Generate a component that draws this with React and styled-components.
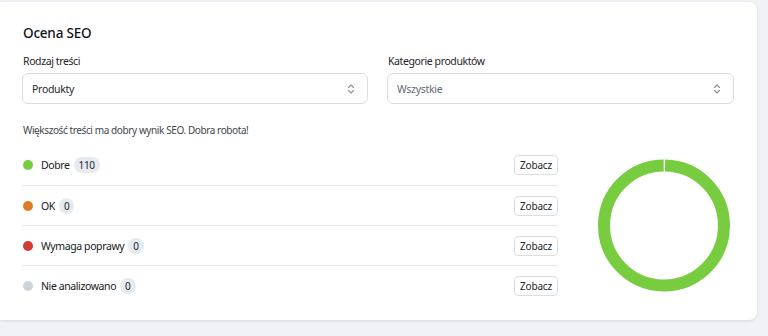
import React from 'react';
import styled, { createGlobalStyle } from 'styled-components';

const GlobalStyle = createGlobalStyle`
    html, body {
        margin: 0;
        padding: 0;
        background: #f0f2f7;
        font-family: "Noto Sans", "Open Sans", sans-serif;
        color: #1a1d21;
    }
`;

const Page = styled.div`
    width: 768px;
    height: 336px;
    padding-top: 2px;
    box-sizing: border-box;
`;

const Card = styled.div`
    width: 757px;
    height: 318px;
    box-sizing: border-box;
    background: #fff;
    border-radius: 0 8px 8px 0;
    box-shadow: 0 1px 3px rgba(30, 40, 60, 0.12);
    padding: 21px 23px 15px 22px;
    display: flex;
    flex-direction: column;
`;

const Title = styled.h3`
    margin: 0 0 11px 1px;
    font-size: 13.5px;
    font-weight: 500;
    line-height: 20px;
    letter-spacing: -0.2px;
    color: #111418;
`;

const Filters = styled.div`
    display: grid;
    grid-template-columns: 346px 347px;
    column-gap: 19px;
`;

const Field = styled.div`
    display: flex;
    flex-direction: column;
`;

const Label = styled.label`
    font-size: 10.5px;
    line-height: 15px;
    letter-spacing: -0.4px;
    margin: 0 0 4px 1px;
    color: #1f2328;
`;

const Select = styled.div`
    height: 31px;
    box-sizing: border-box;
    border: 1px solid #d9dee5;
    border-radius: 6px;
    display: flex;
    align-items: center;
    justify-content: space-between;
    padding: 0 12px 0 9px;
    font-size: 10.5px;
    letter-spacing: -0.3px;
    color: ${p => (p.muted ? '#646a73' : '#22262c')};
`;

const Info = styled.p`
    margin: 19px 0 0 1px;
    font-size: 10px;
    line-height: 14px;
    letter-spacing: -0.4px;
    color: #41464e;
`;

const Body = styled.div`
    display: flex;
    align-items: center;
    margin-top: 8px;
`;

const List = styled.div`
    width: 536px;
    display: flex;
    flex-direction: column;
`;

const Row = styled.div`
    height: 40px;
    box-sizing: border-box;
    display: flex;
    align-items: center;
    border-top: ${p => (p.first ? 'none' : '1px solid #e4e7ec')};
`;

const Dot = styled.span`
    width: 10px;
    height: 10px;
    border-radius: 50%;
    background: ${p => p.color};
    margin: 0 8px 0 1px;
`;

const Name = styled.span`
    font-size: 10.5px;
    letter-spacing: -0.4px;
    color: #16191d;
`;

const Count = styled.span`
    margin-left: 4px;
    background: #e6eaf1;
    border-radius: 9px;
    padding: 0 5px;
    height: 16px;
    line-height: 16px;
    font-size: 10px;
    letter-spacing: -0.3px;
    color: #22262c;
`;

const Button = styled.button`
    margin-left: auto;
    height: 20px;
    width: 44px;
    padding: 0;
    background: #fff;
    border: 1px solid #d9dee5;
    border-radius: 4px;
    font-family: inherit;
    font-size: 10px;
    letter-spacing: -0.2px;
    color: #22262c;
`;

const Chart = styled.div`
    margin-left: 40px;
    width: 132px;
    height: 133px;
`;

const rows = [
    { name: 'Dobre', count: 110, color: '#78cc3f' },
    { name: 'OK', count: 0, color: '#e07b24' },
    { name: 'Wymaga poprawy', count: 0, color: '#d23a36' },
    { name: 'Nie analizowano', count: 0, color: '#cdd3dc' },
];

const Chevrons = () => (
    <svg width="8" height="12" viewBox="0 0 8 12" fill="none" stroke="#8a909a" strokeWidth="1.1" strokeLinecap="round" strokeLinejoin="round">
        <path d="M1.5 4.5 L4 2 L6.5 4.5" />
        <path d="M1.5 7.5 L4 10 L6.5 7.5" />
    </svg>
);

const Donut = () => {
    const r = 60;
    const c = 2 * Math.PI * r;
    return (
        <svg width="132" height="133" viewBox="0 0 132 133">
            <circle
                cx="66"
                cy="66.5"
                r={r}
                fill="none"
                stroke="#78cc3f"
                strokeWidth="12"
                strokeDasharray={`${c - 2} ${c}`}
                transform="rotate(-89 66 66.5)"
            />
        </svg>
    );
};

const App = () => {
    return (
        <Page>
            <GlobalStyle />
            <Card>
                <Title>Ocena SEO</Title>
                <Filters>
                    <Field>
                        <Label>Rodzaj treści</Label>
                        <Select>Produkty<Chevrons /></Select>
                    </Field>
                    <Field>
                        <Label>Kategorie produktów</Label>
                        <Select muted>Wszystkie<Chevrons /></Select>
                    </Field>
                </Filters>
                <Info>Większość treści ma dobry wynik SEO. Dobra robota!</Info>
                <Body>
                    <List>
                        {rows.map((r, i) => (
                            <Row key={r.name} first={i === 0}>
                                <Dot color={r.color} />
                                <Name>{r.name}</Name>
                                <Count>{r.count}</Count>
                                <Button type='button'>Zobacz</Button>
                            </Row>
                        ))}
                    </List>
                    <Chart>
                        <Donut />
                    </Chart>
                </Body>
            </Card>
        </Page>
    );
};

export default App;
